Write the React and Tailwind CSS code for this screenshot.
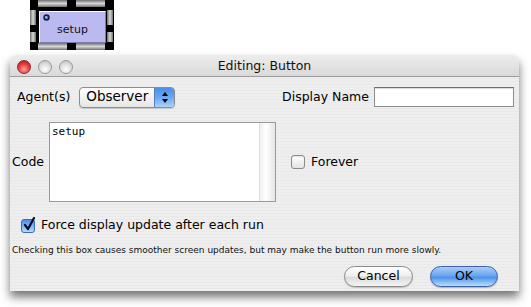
export default function App() {
  return (
    <div className="w-[531px] h-[307px] bg-white overflow-hidden font-['DejaVu_Sans',sans-serif] text-black">
      {/* Button widget in the interface */}
      <div className="ml-[30px] w-[84px] h-[50px] bg-black relative">
        <div className="absolute left-[8px] top-0 w-[29px] h-[7px] bg-[linear-gradient(#6f6f6f,#d8d8d8_50%,#6f6f6f)]" />
        <div className="absolute left-[46px] top-0 w-[29px] h-[7px] bg-[linear-gradient(#6f6f6f,#d8d8d8_50%,#6f6f6f)]" />
        <div className="absolute left-[8px] top-[43px] w-[29px] h-[7px] bg-[linear-gradient(#6f6f6f,#d8d8d8_50%,#6f6f6f)]" />
        <div className="absolute left-[46px] top-[43px] w-[29px] h-[7px] bg-[linear-gradient(#6f6f6f,#d8d8d8_50%,#6f6f6f)]" />
        <div className="absolute left-0 top-[10px] w-[6px] h-[15px] bg-[linear-gradient(90deg,#6f6f6f,#d8d8d8_50%,#6f6f6f)]" />
        <div className="absolute left-0 top-[32px] w-[6px] h-[10px] bg-[linear-gradient(90deg,#6f6f6f,#d8d8d8_50%,#6f6f6f)]" />
        <div className="absolute left-[77px] top-[10px] w-[6px] h-[15px] bg-[linear-gradient(90deg,#6f6f6f,#d8d8d8_50%,#6f6f6f)]" />
        <div className="absolute left-[77px] top-[32px] w-[6px] h-[10px] bg-[linear-gradient(90deg,#6f6f6f,#d8d8d8_50%,#6f6f6f)]" />
        <div className="absolute left-[9px] top-[11px] w-[67px] h-[32px] bg-[#babaf0] border-t border-l border-t-white border-l-white border-b border-r border-b-[#7a7aa8] border-r-[#7a7aa8] flex items-center justify-center">
          <span className="text-[11px] leading-none mt-[4px] text-[#111]">setup</span>
          <svg className="absolute left-[3px] top-[2px]" width="7" height="7" viewBox="0 0 7 7">
            <circle cx="3.5" cy="3.5" r="3.2" fill="#1a1a3a" />
            <circle cx="3.5" cy="3.5" r="1.6" fill="#5b8de0" />
            <circle cx="3" cy="3" r="0.7" fill="#fff" />
          </svg>
        </div>
      </div>

      {/* Dialog window */}
      <div className="ml-[10px] mt-[5px] w-[509px] rounded-t-[6px] shadow-[0_6px_10px_rgba(0,0,0,0.55)] overflow-hidden">
        {/* Title bar */}
        <div className="h-[22px] relative flex items-center justify-center bg-[linear-gradient(#ededed,#d9d9d9)] border-b border-[#9c9c9c]">
          <div className="absolute left-[7px] top-[5px] flex gap-[7px]">
            <div className="w-[14px] h-[14px] rounded-full border border-[#8a2a2a] bg-[radial-gradient(circle_at_50%_70%,#ff9a9a,#e23a3a_55%,#a81a1a)]" />
            <div className="w-[14px] h-[14px] rounded-full border border-[#9a9a9a] bg-[radial-gradient(circle_at_50%_70%,#ffffff,#dcdcdc_55%,#b4b4b4)]" />
            <div className="w-[14px] h-[14px] rounded-full border border-[#9a9a9a] bg-[radial-gradient(circle_at_50%_70%,#ffffff,#dcdcdc_55%,#b4b4b4)]" />
          </div>
          <span className="text-[12.5px] text-[#111] mt-[1px]">Editing: Button</span>
        </div>

        {/* Body */}
        <div className="h-[214px] bg-[repeating-linear-gradient(0deg,#eeeeee_0px,#eeeeee_2px,#e9e9e9_2px,#e9e9e9_3px)] flex flex-col">
          {/* Row 1 */}
          <div className="mt-[10px] h-[20px] flex items-center pl-[7px] pr-[5px]">
            <span className="text-[12.5px]">Agent(s)</span>
            <div className="ml-[9px] w-[96px] h-[21px] rounded-[4px] border border-[#8c8c8c] bg-[linear-gradient(#ffffff,#f2f2f2_50%,#e6e6e6)] flex items-center overflow-hidden shadow-[0_1px_1px_rgba(0,0,0,0.15)]">
              <span className="flex-1 pl-[6px] text-[13.5px] leading-none">Observer</span>
              <div className="w-[20px] h-full bg-[linear-gradient(#4d8eea,#6aa8f3_50%,#a9d3fb)] border-l border-[#5a7fb8] flex flex-col items-center justify-center gap-[3px]">
                <svg width="6" height="4" viewBox="0 0 6 4"><path d="M3 0 L6 4 L0 4 Z" fill="#000" /></svg>
                <svg width="6" height="4" viewBox="0 0 6 4"><path d="M0 0 L6 0 L3 4 Z" fill="#000" /></svg>
              </div>
            </div>
            <div className="flex-1" />
            <span className="text-[12.5px]">Display Name</span>
            <div className="ml-[5px] w-[140px] h-[20px] bg-white border border-[#8e8e8e] border-t-[#6e6e6e] shadow-[inset_0_1px_1px_rgba(0,0,0,0.15)]" />
          </div>

          {/* Row 2 */}
          <div className="mt-[15px] h-[80px] flex items-center pl-[2px]">
            <span className="text-[12.5px] w-[37px]">Code</span>
            <div className="w-[227px] h-[80px] bg-white border border-[#9a9a9a] flex">
              <div className="flex-1 pl-[2px] pt-[2px] font-['DejaVu_Sans_Mono',monospace] text-[11px] leading-[13px]">setup</div>
              <div className="w-[16px] h-full bg-[linear-gradient(90deg,#f0f0f0,#ffffff_40%,#e4e4e4)] border-l border-[#dcdcdc]" />
            </div>
            <div className="ml-[15px] w-[14px] h-[14px] rounded-[3px] border border-[#8a8a8a] bg-[linear-gradient(#ffffff,#e4e4e4)] shadow-[inset_0_1px_1px_rgba(0,0,0,0.1)]" />
            <span className="ml-[6px] text-[12.5px]">Forever</span>
          </div>

          {/* Row 3 */}
          <div className="mt-[16px] h-[15px] flex items-center pl-[11px]">
            <div className="w-[14px] h-[14px] rounded-[3px] border border-[#3d6db0] bg-[linear-gradient(#4f8ee8,#7ab4f5_50%,#b5dafc)] relative">
              <svg className="absolute left-[1px] top-[-3px]" width="13" height="15" viewBox="0 0 13 15">
                <path d="M2 8 L5 12 L11 1" stroke="#0a0a2a" strokeWidth="2.2" fill="none" strokeLinecap="round" strokeLinejoin="round" />
              </svg>
            </div>
            <span className="ml-[6px] text-[12.5px]">Force display update after each run</span>
          </div>

          {/* Row 4 */}
          <div className="mt-[11px] h-[12px] flex items-center pl-[2px]">
            <span className="text-[9px] leading-none text-[#111]">Checking this box causes smoother screen updates, but may make the button run more slowly.</span>
          </div>

          {/* Row 5 */}
          <div className="mt-[10px] flex justify-end gap-[17px] pr-[21px]">
            <div className="w-[69px] h-[21px] rounded-full border border-[#8a8a8a] bg-[linear-gradient(#ffffff,#f0f0f0_45%,#dcdcdc_55%,#f4f4f4)] flex items-center justify-center shadow-[0_1px_1px_rgba(0,0,0,0.2)]">
              <span className="text-[12.5px] leading-none">Cancel</span>
            </div>
            <div className="w-[68px] h-[21px] rounded-full border border-[#3b5fa8] bg-[linear-gradient(#a9cdf7,#6aa6ef_45%,#4d92ec_55%,#b8e0ff)] flex items-center justify-center shadow-[0_1px_1px_rgba(0,0,0,0.25)]">
              <span className="text-[12.5px] leading-none">OK</span>
            </div>
          </div>
        </div>
      </div>
    </div>
  );
}
